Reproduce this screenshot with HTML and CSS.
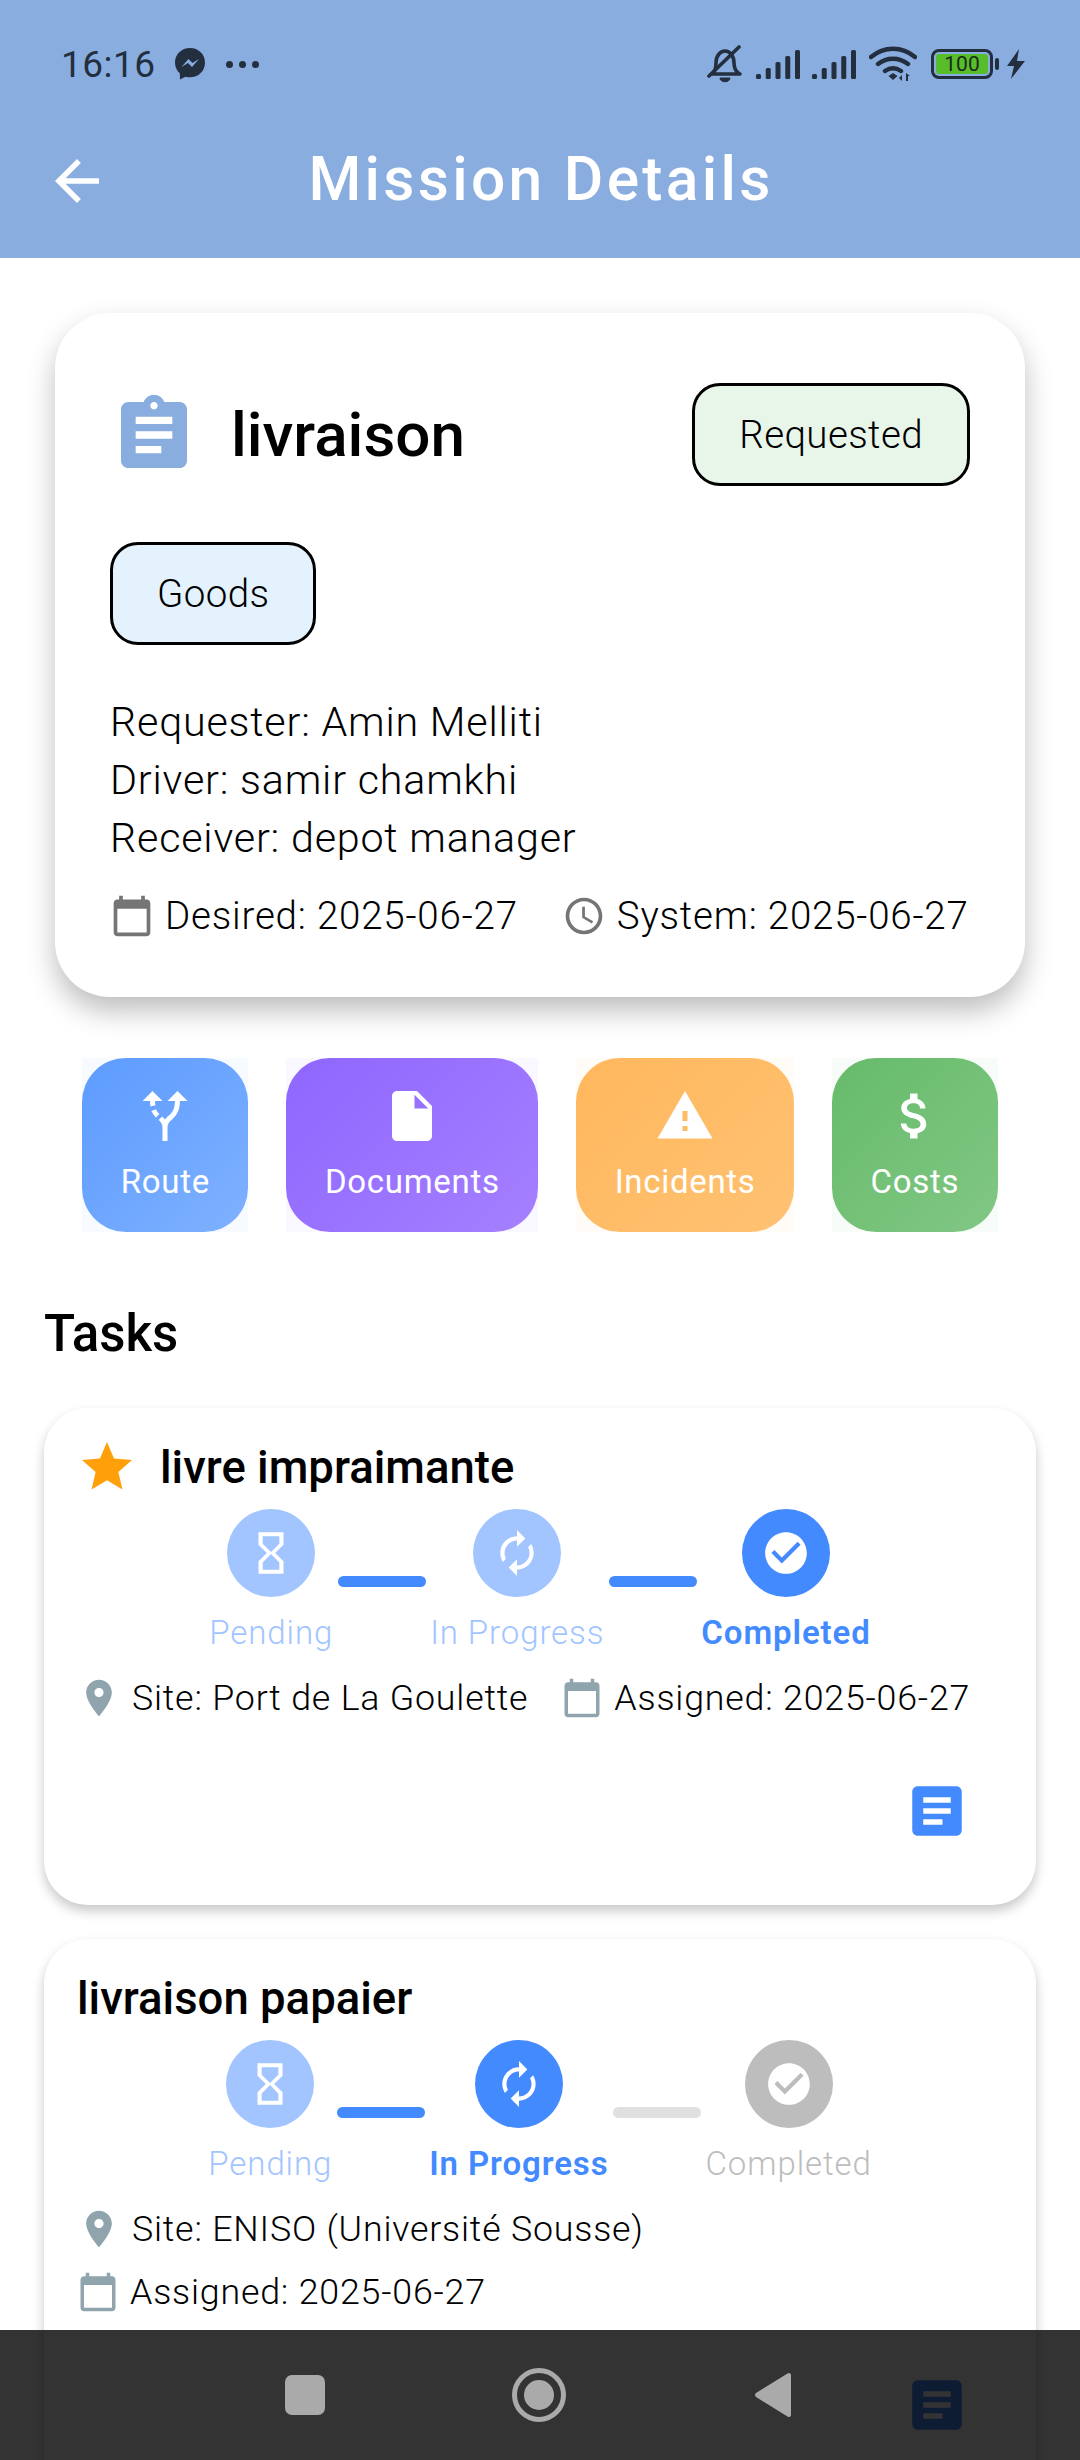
FILE: index.html
```html
<!DOCTYPE html>
<html>
<head>
    <meta charset="utf-8">
    <title>Mission Details</title>
    <link rel="stylesheet" href="styles.css">
</head>
<body>

<svg class="defs" width="0" height="0">
    <symbol id="i-back" viewBox="0 0 24 24"><path d="M20 11H7.83l5.59-5.59L12 4l-8 8 8 8 1.41-1.41L7.83 13H20v-2z"/></symbol>
    <symbol id="i-assignment" viewBox="0 0 24 24"><path d="M19 3h-4.18C14.4 1.84 13.3 1 12 1c-1.3 0-2.4.84-2.82 2H5c-1.1 0-2 .9-2 2v14c0 1.1.9 2 2 2h14c1.1 0 2-.9 2-2V5c0-1.1-.9-2-2-2zm-7 0c.55 0 1 .45 1 1s-.45 1-1 1-1-.45-1-1 .45-1 1-1zm2 14H7v-2h7v2zm3-4H7v-2h10v2zm0-4H7V7h10v2z"/></symbol>
    <symbol id="i-calendar" viewBox="0 0 24 24"><path d="M20 3h-1V1h-2v2H7V1H5v2H4c-1.1 0-2 .9-2 2v16c0 1.1.9 2 2 2h16c1.1 0 2-.9 2-2V5c0-1.1-.9-2-2-2zm0 18H4V8h16v13z"/></symbol>
    <symbol id="i-clock" viewBox="0 0 24 24"><path d="M11.99 2C6.47 2 2 6.48 2 12s4.47 10 9.99 10C17.52 22 22 17.52 22 12S17.52 2 11.99 2zM12 20c-4.42 0-8-3.58-8-8s3.58-8 8-8 8 3.58 8 8-3.58 8-8 8zm.5-13H11v6l5.25 3.15.75-1.23-4.5-2.67z"/></symbol>
    <symbol id="i-route" viewBox="0 0 24 24"><path d="M9.78 11.16l-1.42 1.42c-.68-.69-1.34-1.53-1.79-2.54l1.84-.74c.3.82.79 1.39 1.37 1.86zM11 6L7 2 3 6h3.02c.02.81.08 1.54.19 2.17l1.94-.49C8.08 7.2 8.03 6.63 8.02 6H11zm10 0l-4-4-4 4h2.99c-.1 3.68-1.28 4.75-2.54 5.88-.5.44-1.01.92-1.45 1.55-.34-.49-.73-.88-1.13-1.24L9.46 13.6c.93.85 1.54 1.54 1.54 3.4v5h2v-5c0-2.02.71-2.66 1.79-3.63 1.38-1.24 3.08-2.78 3.2-7.37H21z"/></symbol>
    <symbol id="i-file" viewBox="0 0 24 24"><path d="M6 2c-1.1 0-1.99.9-1.99 2L4 20c0 1.1.89 2 1.99 2H18c1.1 0 2-.9 2-2V8l-6-6H6zm7 7V3.5L18.5 9H13z"/></symbol>
    <symbol id="i-warning" viewBox="0 0 24 24"><path d="M1 21h22L12 2 1 21zm12-3h-2v-2h2v2zm0-4h-2v-4h2v4z"/></symbol>
    <symbol id="i-money" viewBox="0 0 24 24"><path d="M11.8 10.9c-2.27-.59-3-1.2-3-2.15 0-1.09 1.01-1.85 2.7-1.85 1.78 0 2.44.85 2.5 2.1h2.21c-.07-1.72-1.12-3.3-3.21-3.81V3h-3v2.16c-1.94.42-3.5 1.68-3.5 3.61 0 2.31 1.91 3.46 4.7 4.13 2.5.6 3 1.48 3 2.41 0 .69-.49 1.79-2.7 1.79-2.06 0-2.87-.92-2.98-2.1h-2.2c.12 2.19 1.76 3.42 3.68 3.83V21h3v-2.15c1.95-.37 3.5-1.5 3.5-3.55 0-2.84-2.43-3.81-4.7-4.4z"/></symbol>
    <symbol id="i-star" viewBox="0 0 24 24"><path d="M12 17.27L18.18 21l-1.64-7.03L22 9.24l-7.19-.61L12 2 9.19 8.63 2 9.24l5.46 4.73L5.82 21z"/></symbol>
    <symbol id="i-hourglass" viewBox="0 0 24 24"><path d="M6 2v6h.01L6 8.01 10 12l-4 4 .01.01H6V22h12v-5.99h-.01L18 16l-4-4 4-3.99-.01-.01H18V2H6zm10 14.5V20H8v-3.5l4-4 4 4zm-4-5l-4-4V4h8v3.5l-4 4z"/></symbol>
    <symbol id="i-renew" viewBox="0 0 24 24"><path d="M12 6v3l4-4-4-4v3c-4.42 0-8 3.58-8 8 0 1.57.46 3.03 1.24 4.26L6.7 14.8c-.45-.83-.7-1.79-.7-2.8 0-3.31 2.69-6 6-6zm6.76 1.74L17.3 9.2c.44.84.7 1.79.7 2.8 0 3.31-2.69 6-6 6v-3l-4 4 4 4v-3c4.42 0 8-3.58 8-8 0-1.57-.46-3.03-1.24-4.26z"/></symbol>
    <symbol id="i-check" viewBox="0 0 24 24"><path d="M12 2C6.48 2 2 6.48 2 12s4.48 10 10 10 10-4.48 10-10S17.52 2 12 2zm-2 15l-5-5 1.41-1.41L10 14.17l7.59-7.59L19 8l-9 9z"/></symbol>
    <symbol id="i-place" viewBox="0 0 24 24"><path d="M12 2C8.13 2 5 5.13 5 9c0 5.25 7 13 7 13s7-7.75 7-13c0-3.87-3.13-7-7-7zm0 9.5c-1.38 0-2.5-1.12-2.5-2.5s1.12-2.5 2.5-2.5 2.5 1.12 2.5 2.5-1.12 2.5-2.5 2.5z"/></symbol>
    <symbol id="i-article" viewBox="0 0 24 24"><path d="M19 3H5c-1.1 0-2 .9-2 2v14c0 1.1.9 2 2 2h14c1.1 0 2-.9 2-2V5c0-1.1-.9-2-2-2zm-5 14H7v-2h7v2zm3-4H7v-2h10v2zm0-4H7V7h10v2z"/></symbol>
    <symbol id="i-signal" viewBox="0 0 44 29"><rect x="0" y="24" width="5" height="5" rx="1.500"/><rect x="9.750" y="18" width="5" height="11" rx="1.500"/><rect x="19.500" y="12" width="5" height="17" rx="1.500"/><rect x="29.250" y="6" width="5" height="23" rx="1.500"/><rect x="39" y="0" width="5" height="29" rx="1.500"/></symbol>
</svg>

<header class="app-header">
    <div class="status-bar">
        <div class="status-left">
            <span class="time">16:16</span>
            <svg class="messenger" viewBox="0 0 32 34"><path class="ink" d="M16 1C7.500 1 1 7.200 1 15.500c0 4.400 1.800 8.200 4.800 10.800l.2 6.200 5.400-2.800c1.400.4 3 .6 4.600.6 8.500 0 15-6.200 15-14.800C31 7.200 24.500 1 16 1z"/><path class="zig" d="M7.500 20l7-8 4 4 6.500-4-7 8-4-4z"/></svg>
            <div class="dots"><i></i><i></i><i></i></div>
        </div>
        <div class="status-right">
            <svg class="bell" viewBox="0 0 38 38"><path d="M6 29c3-2 4-5 4-11 0-7 4-12 9-12 5 0 9 5 9 12 0 6 2 9 6 11z" fill="none" stroke-width="3.600" stroke-linejoin="round"/><path d="M14 33h10c0 5-10 5-10 0z" stroke-width="1"/><path d="M3 31L33 2" stroke-width="3.600" stroke-linecap="round" fill="none"/></svg>
            <svg class="signal"><use href="#i-signal"/></svg>
            <svg class="signal"><use href="#i-signal"/></svg>
            <svg class="wifi" viewBox="0 0 48 36"><path d="M2 11c13-11 31-11 44 0M9 18c9-7 21-7 30 0M16 25c5-3.500 11-3.500 16 0" fill="none" stroke-width="4.400" stroke-linecap="round"/><path class="wifi-dot" d="M19.500 30l4.500-3 4.500 3-4.500 4z"/><path class="wifi-dot" d="M33 35v-6l-3 3zM37 27v8h2v-5h2z"/></svg>
            <div class="battery"><div class="battery-level">100</div></div>
            <div class="battery-nub"></div>
            <svg class="bolt" viewBox="0 0 20 30"><path d="M13 0L1 17h7L5 30l14-18h-8z"/></svg>
        </div>
    </div>
    <div class="toolbar">
        <svg class="back"><use href="#i-back"/></svg>
        <h1>Mission Details</h1>
    </div>
</header>

<section class="mission-card">
    <div class="mission-top">
        <svg class="mission-icon"><use href="#i-assignment"/></svg>
        <div class="mission-name">livraison</div>
        <div class="chip chip-green">Requested</div>
    </div>
    <div class="chip chip-blue chip-type">Goods</div>
    <div class="people">
        <div>Requester: Amin Melliti</div>
        <div>Driver: samir chamkhi</div>
        <div>Receiver: depot manager</div>
    </div>
    <div class="dates">
        <div class="meta meta-large"><svg class="ico-grey"><use href="#i-calendar"/></svg>Desired: 2025-06-27</div>
        <div class="meta meta-large"><svg class="ico-grey"><use href="#i-clock"/></svg>System: 2025-06-27</div>
    </div>
</section>

<nav class="actions">
    <div class="tile tile-blue"><div class="tile-face"><svg><use href="#i-route"/></svg><span>Route</span></div></div>
    <div class="tile tile-purple"><div class="tile-face"><svg><use href="#i-file"/></svg><span>Documents</span></div></div>
    <div class="tile tile-orange"><div class="tile-face"><svg><use href="#i-warning"/></svg><span>Incidents</span></div></div>
    <div class="tile tile-green"><div class="tile-face"><svg><use href="#i-money"/></svg><span>Costs</span></div></div>
</nav>

<h2 class="tasks-title">Tasks</h2>

<section class="task-card">
    <div class="task-top">
        <svg class="star"><use href="#i-star"/></svg>
        <div class="task-name">livre impraimante</div>
    </div>
    <div class="stepper">
        <div class="step faded"><div class="dot"><svg><use href="#i-hourglass"/></svg></div><span>Pending</span></div>
        <div class="bar"></div>
        <div class="step faded"><div class="dot"><svg><use href="#i-renew"/></svg></div><span>In Progress</span></div>
        <div class="bar"></div>
        <div class="step current"><div class="dot"><svg><use href="#i-check"/></svg></div><span>Completed</span></div>
    </div>
    <div class="task-meta">
        <div class="meta"><svg class="ico-slate"><use href="#i-place"/></svg>Site: Port de La Goulette</div>
        <div class="meta meta-assigned"><svg class="ico-slate"><use href="#i-calendar"/></svg>Assigned: 2025-06-27</div>
    </div>
    <div class="task-actions"><svg class="doc-btn"><use href="#i-article"/></svg></div>
</section>

<section class="task-card">
    <div class="task-top">
        <div class="task-name">livraison papaier</div>
    </div>
    <div class="stepper">
        <div class="step faded"><div class="dot"><svg><use href="#i-hourglass"/></svg></div><span>Pending</span></div>
        <div class="bar"></div>
        <div class="step current"><div class="dot"><svg><use href="#i-renew"/></svg></div><span>In Progress</span></div>
        <div class="bar bar-off"></div>
        <div class="step off"><div class="dot"><svg><use href="#i-check"/></svg></div><span>Completed</span></div>
    </div>
    <div class="task-meta">
        <div class="meta"><svg class="ico-slate"><use href="#i-place"/></svg>Site: ENISO (Université Sousse)</div>
        <div class="meta meta-assigned"><svg class="ico-slate"><use href="#i-calendar"/></svg>Assigned: 2025-06-27</div>
    </div>
    <div class="task-actions"><svg class="doc-btn"><use href="#i-article"/></svg></div>
</section>

<div class="nav-bar">
    <div class="nav-square"></div>
    <div class="nav-circle"><i></i></div>
    <svg class="nav-back" viewBox="0 0 36 46"><path d="M34 1c1 0 2 1 2 2v40c0 1-1 2-2 2-.5 0-1-.2-1.500-.6L1 25c-1.300-1-1.300-3 0-4L32.500 1.600C33 1.200 33.500 1 34 1z"/></svg>
</div>

</body>
</html>
```

FILE: styles.css
```css
* {
    box-sizing: border-box;
}
body {
    margin: 0;
    width: 1080px;
    height: 2460px;
    overflow: hidden;
    position: relative;
    background-color: #ffffff;
    color: #000000;
    font-family: Roboto, "Liberation Sans", sans-serif;
}
.defs {
    position: absolute;
}
svg {
    display: block;
    flex: none;
    fill: currentColor;
}

/* header */
.app-header {
    height: 258px;
    padding-top: 40px;
    background-color: #8aade0;
}
.status-bar {
    height: 48px;
    padding: 0 54px 0 61px;
    display: flex;
    align-items: center;
    justify-content: space-between;
    color: #232f3e;
}
.status-left, .status-right {
    display: flex;
    align-items: center;
}
.time {
    font-size: 37px;
    letter-spacing: 0.5px;
}
.messenger {
    width: 32px;
    height: 34px;
    margin-left: 18px;
}
.messenger .ink {
    fill: #232f3e;
}
.messenger .zig {
    fill: #8aade0;
}
.dots {
    display: flex;
    gap: 6px;
    margin-left: 20px;
}
.dots i {
    width: 7px;
    height: 7px;
    border-radius: 50%;
    background-color: #232f3e;
}
.bell {
    width: 38px;
    height: 38px;
    fill: #232f3e;
    stroke: #232f3e;
}
.signal {
    width: 44px;
    height: 29px;
    margin-left: 12px;
}
.wifi {
    width: 48px;
    height: 36px;
    margin-left: 13px;
    stroke: #232f3e;
}
.wifi-dot {
    stroke: none;
}
.battery {
    width: 62px;
    height: 30px;
    margin-left: 14px;
    padding: 2px;
    border: 3px solid #232f3e;
    border-radius: 8px;
}
.battery-level {
    height: 100%;
    border-radius: 3px;
    background-color: #57bd2b;
    color: #1b2b1c;
    font-size: 21px;
    line-height: 20px;
    text-align: center;
}
.battery-nub {
    width: 4px;
    height: 12px;
    margin-left: 2px;
    border-radius: 2px;
    background-color: #232f3e;
}
.bolt {
    width: 20px;
    height: 30px;
    margin-left: 7px;
}
.toolbar {
    height: 170px;
    padding: 12px 44px 0;
    display: flex;
    align-items: center;
    color: #ffffff;
}
.back {
    width: 66px;
    height: 66px;
    margin-top: 4px;
}
.toolbar h1 {
    flex: 1;
    margin: 0 64px 0 0;
    text-align: center;
    font-size: 60.5px;
    font-weight: 500;
    letter-spacing: 3.3px;
}

/* mission card */
.mission-card {
    width: 970px;
    margin: 55px 0 0 55px;
    padding: 70px 55px 52px;
    border-radius: 55px;
    background-color: #ffffff;
    box-shadow: 0 14px 28px rgba(0, 0, 0, 0.26);
}
.mission-top {
    display: flex;
    align-items: center;
}
.mission-icon {
    width: 88px;
    height: 88px;
    color: #8aade0;
}
.mission-name {
    flex: 1;
    margin-left: 33px;
    font-size: 62px;
    font-weight: 500;
}
.chip {
    height: 103px;
    padding: 0 44px;
    display: flex;
    align-items: center;
    border: 3px solid #000000;
    border-radius: 28px;
    font-size: 38.5px;
    font-weight: 350;
    letter-spacing: 0.4px;
}
.chip-green {
    background-color: #e8f5e9;
}
.chip-blue {
    background-color: #e3f2fd;
}
.chip-type {
    width: fit-content;
    margin-top: 56px;
}
.people {
    margin-top: 48px;
    font-size: 41.25px;
    font-weight: 300;
    line-height: 58px;
    letter-spacing: 0.8px;
}
.dates {
    margin-top: 20px;
    display: flex;
    gap: 44px;
}
.meta {
    display: flex;
    align-items: center;
    gap: 11px;
    font-size: 35.75px;
    font-weight: 300;
    line-height: 58px;
    letter-spacing: 0.8px;
    white-space: nowrap;
}
.meta-large {
    font-size: 38.5px;
}
.meta svg {
    width: 44px;
    height: 44px;
}
.meta-assigned svg {
    width: 42px;
    height: 42px;
}
.ico-grey {
    color: #757575;
}
.ico-slate {
    color: #90a4ae;
}

/* shortcut tiles */
.actions {
    margin-top: 61px;
    display: flex;
    justify-content: center;
    gap: 38px;
}
.tile-face {
    height: 174px;
    padding: 28px 38.5px 0;
    border-radius: 44px;
    display: flex;
    flex-direction: column;
    align-items: center;
    color: #ffffff;
    font-size: 33px;
    line-height: 42px;
    letter-spacing: 0.7px;
}
.tile-face svg {
    width: 60px;
    height: 60px;
    margin-bottom: 15px;
}
.tile-blue {
    background-color: #f7faff;
}
.tile-blue .tile-face {
    background: linear-gradient(135deg, #5c9bff, #7fb1ff);
}
.tile-purple {
    background-color: #f9f7ff;
}
.tile-purple .tile-face {
    background: linear-gradient(135deg, #8e66ff, #a580ff);
}
.tile-orange {
    background-color: #fffbf6;
}
.tile-orange .tile-face {
    background: linear-gradient(135deg, #ffb75c, #ffc273);
}
.tile-green {
    background-color: #f8fcf8;
}
.tile-green .tile-face {
    background: linear-gradient(135deg, #66bb6a, #81c784);
}

.tasks-title {
    margin: 73px 0 45px 44px;
    font-size: 51px;
    font-weight: 500;
    line-height: 58px;
}

/* task cards */
.task-card {
    width: 992px;
    margin: 0 0 34px 44px;
    padding: 29px 33px 28px;
    border-radius: 44px;
    background-color: #ffffff;
    box-shadow: 0 6px 12px rgba(0, 0, 0, 0.22);
}
.task-top {
    height: 60px;
    display: flex;
    align-items: center;
    gap: 23px;
}
.star {
    width: 60px;
    height: 60px;
    color: #ff9f0a;
}
.task-name {
    font-size: 45.5px;
    font-weight: 500;
}
.stepper {
    margin-top: 12px;
    display: flex;
    justify-content: center;
    align-items: center;
}
.step {
    display: flex;
    flex-direction: column;
    align-items: center;
    font-size: 33px;
    font-weight: 300;
    line-height: 42px;
    letter-spacing: 0.9px;
}
.step span {
    margin-top: 15px;
}
.dot {
    width: 88px;
    height: 88px;
    border-radius: 50%;
    display: flex;
    align-items: center;
    justify-content: center;
    color: #ffffff;
}
.dot svg {
    width: 50px;
    height: 50px;
}
.bar {
    width: 88px;
    height: 11px;
    margin: 0 4.5px;
    border-radius: 6px;
    background-color: #448aff;
}
.bar-off {
    background-color: #e0e0e0;
}
.faded .dot {
    background-color: #a2c5ff;
}
.faded span {
    color: #a2c5ff;
}
.current .dot {
    background-color: #448aff;
}
.current span {
    color: #448aff;
    font-weight: 600;
}
.off .dot {
    background-color: #bdbdbd;
}
.off span {
    color: #bdbdbd;
}
.task-meta {
    margin-top: 15px;
    display: flex;
    flex-wrap: wrap;
    column-gap: 33px;
    row-gap: 5px;
}
.task-actions {
    margin-top: 18px;
    padding: 33px;
    display: flex;
    justify-content: flex-end;
}
.doc-btn {
    width: 66px;
    height: 66px;
    color: #448aff;
}

/* android nav bar, see-through black over the scrolled content */
.nav-bar {
    position: absolute;
    left: 0;
    right: 0;
    bottom: 0;
    height: 130px;
    padding-left: 285px;
    display: flex;
    align-items: center;
    background-color: rgba(0, 0, 0, 0.8);
}
.nav-square {
    width: 40px;
    height: 40px;
    border-radius: 7px;
    background-color: #aaaaaa;
}
.nav-circle {
    width: 54px;
    height: 54px;
    margin-left: 187px;
    padding: 7px;
    border: 5px solid #aaaaaa;
    border-radius: 50%;
}
.nav-circle i {
    display: block;
    width: 30px;
    height: 30px;
    border-radius: 50%;
    background-color: #aaaaaa;
}
.nav-back {
    width: 36px;
    height: 46px;
    margin-left: 189px;
    color: #aaaaaa;
}
```
